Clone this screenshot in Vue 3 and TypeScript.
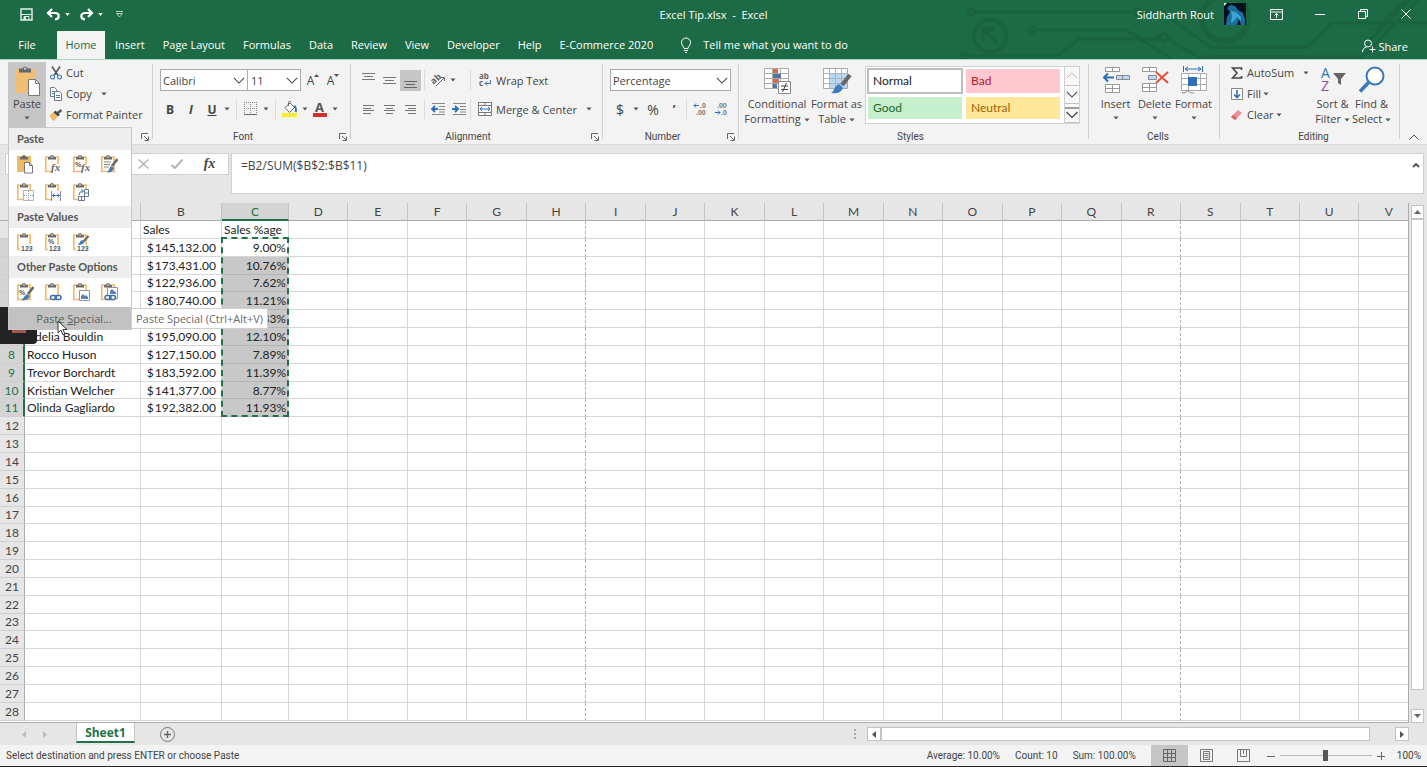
<script setup lang="ts">
import { ref } from 'vue'

interface Row {
  name: string
  sales: string
  share: string
}

const tabs = ['Insert', 'Page Layout', 'Formulas', 'Data', 'Review', 'View', 'Developer', 'Help', 'E-Commerce 2020']
const columns = 'ABCDEFGHIJKLMNOPQRSTUV'.split('')

const data: Record<number, Row> = {
  1: { name: '', sales: 'Sales', share: 'Sales %age' },
  2: { name: '', sales: '145,132.00', share: '9.00%' },
  3: { name: '', sales: '173,431.00', share: '10.76%' },
  4: { name: '', sales: '122,936.00', share: '7.62%' },
  5: { name: '', sales: '180,740.00', share: '11.21%' },
  6: { name: '', sales: '', share: '9.33%' },
  7: { name: 'Adelia Bouldin', sales: '195,090.00', share: '12.10%' },
  8: { name: 'Rocco Huson', sales: '127,150.00', share: '7.89%' },
  9: { name: 'Trevor Borchardt', sales: '183,592.00', share: '11.39%' },
  10: { name: 'Kristian Welcher', sales: '141,377.00', share: '8.77%' },
  11: { name: 'Olinda Gagliardo', sales: '192,382.00', share: '11.93%' },
}

const pasteOptions = [
  { icon: 'p-all', label: 'Paste' },
  { icon: 'p-fx', label: 'Formulas' },
  { icon: 'p-pfx', label: 'Formulas & Number Formatting' },
  { icon: 'p-src', label: 'Keep Source Formatting' },
  { icon: 'p-nob', label: 'No Borders' },
  { icon: 'p-wid', label: 'Keep Source Column Widths' },
  { icon: 'p-trn', label: 'Transpose' },
]
const valueOptions = [
  { icon: 'p-val', label: 'Values' },
  { icon: 'p-valn', label: 'Values & Number Formatting' },
  { icon: 'p-vals', label: 'Values & Source Formatting' },
]
const otherOptions = [
  { icon: 'p-fmt', label: 'Formatting' },
  { icon: 'p-lnk', label: 'Paste Link' },
  { icon: 'p-pic', label: 'Picture' },
  { icon: 'p-lpic', label: 'Linked Picture' },
]

const formula = ref('=B2/SUM($B$2:$B$11)')
const zoom = ref(50)
const selected = (n: number) => n >= 2 && n <= 11
</script>

<template>
  <div class="app">
    <svg class="defs" aria-hidden="true">
      <symbol id="down" viewBox="0 0 6 4"><path d="M0.5 0.5h5L3 3.5z" fill="#555" /></symbol>
      <symbol id="chev" viewBox="0 0 14 8"><path d="M1 1l6 6 6-6" fill="none" stroke="#444" stroke-width="1.2" /></symbol>
      <symbol id="launch" viewBox="0 0 8 8">
        <path d="M0.5 6V0.5H7M3 3l4 4M7.5 3.5v4h-4" fill="none" stroke="#666" />
      </symbol>
      <symbol id="clip" viewBox="0 0 18 20">
        <path d="M1.800 3h12.400v14.500H1.800z" fill="#fdfcf9" stroke="#ecbc74" stroke-width="1.700" />
        <path d="M4 3h2C6.200 0.300 9.800 0.300 10 3h2v2.500H4z" fill="#6a6b6f" /><circle cx="8" cy="3" r="0.800" fill="#fff" />
      </symbol>
      <symbol id="p-all" viewBox="0 0 18 20">
        <path d="M1 2h14v16H1z" fill="#f0b968" />
        <path d="M4 3h2C6.200 0.300 9.800 0.300 10 3h2v2.500H4z" fill="#6a6b6f" />
        <path d="M8.500 8.500h5l3 3v7.500h-8z" fill="#fff" stroke="#777" /><path d="M13.500 8.500v3h3" fill="none" stroke="#777" />
      </symbol>
      <symbol id="p-fx" viewBox="0 0 18 20">
        <use href="#clip" /><path d="M9 10h9v10H9z" fill="#fff" />
        <text x="7" y="17" class="gfx">fx</text>
      </symbol>
      <symbol id="p-pfx" viewBox="0 0 18 20">
        <use href="#clip" /><path d="M10 10h8v10h-8z" fill="#fff" />
        <text x="3" y="13" class="gnum">%</text><text x="9" y="17" class="gfx">fx</text>
      </symbol>
      <symbol id="p-src" viewBox="0 0 18 20">
        <use href="#clip" /><path d="M4 8h7M4 10.500h6M4 13h5" stroke="#888" />
        <path d="M17.500 5l-5.500 7" stroke="#666" stroke-width="2.500" />
        <path d="M7 18.500c2-1 2-5 4.500-6.500l2.500 2c-1 3-3 4.500-7 4.500z" fill="#3f7cb8" />
      </symbol>
      <symbol id="p-nob" viewBox="0 0 18 20">
        <use href="#clip" /><path d="M7.500 8.500h10v10h-10z" fill="#fff" stroke="#b5b5b5" />
        <path d="M12.500 9v9M8 13.500h9" stroke="#999" stroke-dasharray="1 1" />
      </symbol>
      <symbol id="p-wid" viewBox="0 0 18 20">
        <use href="#clip" /><path d="M8 9h10v11H8z" fill="#fff" />
        <path d="M7.500 9v10M16.500 9v10" stroke="#8a8fa0" /><path d="M8 13.500h8M10.500 11.500l-2 2 2 2M13.500 11.500l2 2-2 2" fill="none" stroke="#3f6fa8" />
      </symbol>
      <symbol id="p-trn" viewBox="0 0 18 20">
        <use href="#clip" /><path d="M7 8h11v12H7z" fill="#fff" />
        <path d="M12.500 7.500h4v7h-4zM12.500 11h4M6.500 14.500h6v4h-6zM9.500 14.500v4" fill="none" stroke="#66789a" />
        <path d="M7.500 13c0-3 1-4 3.500-4M9.500 7l2 2-2 2" fill="none" stroke="#3f6fa8" />
      </symbol>
      <symbol id="p-val" viewBox="0 0 18 20">
        <use href="#clip" /><path d="M4 12h14v8H4z" fill="#fff" /><text x="5" y="19" class="gnum">123</text>
      </symbol>
      <symbol id="p-valn" viewBox="0 0 18 20">
        <use href="#clip" /><path d="M4 13h14v7H4z" fill="#fff" /><text x="4" y="12" class="gnum">%</text><text x="5" y="19" class="gnum">123</text>
      </symbol>
      <symbol id="p-vals" viewBox="0 0 18 20">
        <use href="#clip" /><path d="M4 13h14v7H4z" fill="#fff" /><path d="M16.500 4l-5 5.500" stroke="#666" stroke-width="2" />
        <path d="M6 13c1-1 2-4 4-5l2.500 2c-1 2-3 3-6.500 3z" fill="#3f7cb8" /><text x="5" y="19" class="gnum">123</text>
      </symbol>
      <symbol id="p-fmt" viewBox="0 0 18 20">
        <use href="#clip" /><text x="3" y="13" class="gnum">%</text><path d="M17.500 5l-5.500 7" stroke="#666" stroke-width="2.500" />
        <path d="M5 18.500c2-1 3-5 6.500-6.500l2.500 2c-1 3-4 4.500-9 4.500z" fill="#3f7cb8" />
      </symbol>
      <symbol id="p-lnk" viewBox="0 0 18 20">
        <use href="#clip" /><path d="M6 13h12v7H6z" fill="#fff" />
        <rect x="6.500" y="13.500" width="6" height="4" rx="2" fill="none" stroke="#3f6fa8" stroke-width="1.500" />
        <rect x="11" y="13.500" width="6" height="4" rx="2" fill="none" stroke="#3f6fa8" stroke-width="1.500" />
      </symbol>
      <symbol id="p-pic" viewBox="0 0 18 20">
        <use href="#clip" /><path d="M7.500 8.500h10v10h-10z" fill="#fff" stroke="#8d95a2" />
        <path d="M9 17v-3l2-2 2 2 1-1 2 2v2z" fill="#5d84b4" />
      </symbol>
      <symbol id="p-lpic" viewBox="0 0 18 20">
        <use href="#clip" /><path d="M7.500 5.500h10v11h-10z" fill="#fff" stroke="#8d95a2" />
        <path d="M10 12V9l2-2 2 2 2 1v2z" fill="#5d84b4" /><path d="M4.500 13h11v5h-11z" fill="#fff" />
        <rect x="5" y="13.500" width="6" height="4" rx="2" fill="none" stroke="#3f6fa8" stroke-width="1.500" />
        <rect x="9.500" y="13.500" width="6" height="4" rx="2" fill="none" stroke="#3f6fa8" stroke-width="1.500" />
      </symbol>
    </svg>

    <header class="top">
      <svg class="circuit" viewBox="0 0 527 59" aria-hidden="true">
        <g fill="none" stroke="#1b623f" stroke-width="3">
          <circle cx="71" cy="12" r="3" /><path d="M75 12h158" /><circle cx="237" cy="12" r="3" />
          <circle cx="90" cy="36" r="16" stroke-width="4" />
          <path d="M97 43L84 30M83 41V29h12" stroke-width="4" />
          <circle cx="132" cy="30" r="3" /><path d="M136 30h90l46 29" />
          <circle cx="63" cy="56" r="3" /><path d="M67 56h90l22-17h80" /><path d="M259 36l5-3 6 4-6 5z" />
          <path d="M268 39l30 18h165l55-57" /><path d="M240 12h22l48 35h98l24-24h95" />
          <path d="M475 30l30-30M470 40l40-40" />
          <circle cx="325" cy="18" r="23" stroke-width="6" />
        </g>
      </svg>
      <div class="titlebar">
        <div class="quick">
          <button class="q save" aria-label="Save">
            <svg width="13" height="13" viewBox="0 0 13 13"><path d="M1 1h11v11H1z" fill="none" stroke="#e6f2eb" stroke-width="1.400" /><path d="M1 6.500h11M4 12V8.500h5V12" fill="none" stroke="#e6f2eb" /><path d="M4 9h2v3H4z" fill="#e6f2eb" /></svg>
          </button>
          <button class="q undo" aria-label="Undo">
            <svg width="15" height="13" viewBox="0 0 15 13"><path d="M2 5h7c5 0 5 6 0 6.500M6 1L2 5l4 4" fill="none" stroke="#fff" stroke-width="2.200" /></svg>
          </button>
          <button class="q drop" aria-label="Undo list"><svg width="5" height="3" viewBox="0 0 6 4"><path d="M0 0h6L3 4z" fill="#fff" /></svg></button>
          <button class="q redo" aria-label="Redo">
            <svg width="15" height="13" viewBox="0 0 15 13"><path d="M13 5H6C1 5 1 11 6 11.500M9 1l4 4-4 4" fill="none" stroke="#fff" stroke-width="2.200" /></svg>
          </button>
          <button class="q drop" aria-label="Redo list"><svg width="5" height="3" viewBox="0 0 6 4"><path d="M0 0h6L3 4z" fill="#fff" /></svg></button>
          <button class="q more" aria-label="Customize Quick Access Toolbar">
            <svg width="9" height="7" viewBox="0 0 9 7"><path d="M1 0.500h7M1.500 2.500h6L4.500 6z" fill="none" stroke="#b4d2c2" /></svg>
          </button>
        </div>
        <h1 class="title">Excel Tip.xlsx&nbsp; -&nbsp; Excel</h1>
        <div class="account">
          <span>Siddharth Rout</span>
          <svg class="avatar" width="22" height="22" viewBox="0 0 22 22" role="img" aria-label="Profile picture">
            <path d="M0 0h22v22H0z" fill="#04101c" />
            <path d="M3 5l3-3 5 1 3 4 5 3 2 6v6h-4l-2-6-2 6H2l1-8 3-5z" fill="#1a6c9c" />
            <path d="M7 8l5 1 5 5 0 4-4-4-4 5-2 1 1-7z" fill="#3aa6d4" /><path d="M0 0h3L0 3z" fill="#cfe" />
          </svg>
          <button class="win" aria-label="Ribbon Display Options">
            <svg width="13" height="11" viewBox="0 0 13 11"><path d="M0.500 0.500h12v10H0.500zM0.500 3h12M6.500 9V4.500M4.500 6.500l2-2 2 2" fill="none" stroke="#fff" /></svg>
          </button>
          <button class="win" aria-label="Minimize"><svg width="10" height="10" viewBox="0 0 10 10"><path d="M0 5.500h10" stroke="#fff" /></svg></button>
          <button class="win" aria-label="Restore"><svg width="10" height="10" viewBox="0 0 10 10"><path d="M0.500 2.500h7v7h-7zM2.500 2.500v-2h7v7h-2" fill="none" stroke="#fff" /></svg></button>
          <button class="win" aria-label="Close"><svg width="10" height="10" viewBox="0 0 10 10"><path d="M0.500 0.500l9 9M9.500 0.500l-9 9" stroke="#fff" /></svg></button>
        </div>
      </div>
      <nav class="tabs">
        <button class="tab file">File</button>
        <button class="tab active">Home</button>
        <button v-for="t in tabs" :key="t" class="tab">{{ t }}</button>
        <button class="tab tell">
          <svg width="12" height="16" viewBox="0 0 12 16"><path d="M4 11.500c0-2-2.500-3-2.500-6a4.500 4.500 0 0 1 9 0c0 3-2.500 4-2.500 6zM4 13.500h4M5 15.500h2" fill="none" stroke="#fff" /></svg>
          Tell me what you want to do
        </button>
        <button class="tab share">
          <svg width="14" height="14" viewBox="0 0 14 14"><circle cx="6" cy="4.500" r="3.500" fill="none" stroke="#fff" /><path d="M0.500 13c0-3 2-4.500 4-5M10.500 7.500v6M7.500 10.500h6" fill="none" stroke="#fff" /></svg>
          Share
        </button>
      </nav>
    </header>

    <section class="ribbon">
      <div class="group clipboard">
        <div class="paste-wrap">
          <button class="paste">
            <svg width="26" height="30" viewBox="0 0 26 30">
              <path d="M1 3h20v24H1z" fill="#f0be74" /><path d="M5 2.500h3.500C9 0 13 0 13.500 2.500H17v4H5z" fill="#66676b" />
              <circle cx="11" cy="2.800" r="1.200" fill="#c6c6c6" />
              <path d="M14.500 13.500h7l4 4v12h-11z" fill="#fff" stroke="#777" /><path d="M21.500 13.500v4h4" fill="none" stroke="#777" />
            </svg>
            <span>Paste</span>
            <svg class="dn" width="6" height="4"><use href="#down" /></svg>
          </button>
          <div class="menu">
            <h2>Paste</h2>
            <div class="opts">
              <button v-for="o in pasteOptions" :key="o.icon" :aria-label="o.label"><svg width="18" height="20"><use :href="'#' + o.icon" /></svg></button>
            </div>
            <h2>Paste Values</h2>
            <div class="opts">
              <button v-for="o in valueOptions" :key="o.icon" :aria-label="o.label"><svg width="18" height="20"><use :href="'#' + o.icon" /></svg></button>
            </div>
            <h2>Other Paste Options</h2>
            <div class="opts">
              <button v-for="o in otherOptions" :key="o.icon" :aria-label="o.label"><svg width="18" height="20"><use :href="'#' + o.icon" /></svg></button>
            </div>
            <button class="special">Paste <u>S</u>pecial...
              <span class="tip" role="tooltip">Paste Special (Ctrl+Alt+V)</span>
              <svg class="cursor" width="11" height="17" viewBox="0 0 11 17"><path d="M1 1v12l3-3 2 5 2-1-2-4.500h4z" fill="#fff" stroke="#333" /></svg>
            </button>
          </div>
        </div>
        <div class="stack">
          <button>
            <svg width="12" height="14" viewBox="0 0 12 14"><path d="M2 0.500l6 9M10 0.500l-6 9" stroke="#555" stroke-width="1.600" /><circle cx="2.500" cy="11" r="2" fill="none" stroke="#4a7ebb" stroke-width="1.200" /><circle cx="9.500" cy="11" r="2" fill="none" stroke="#4a7ebb" stroke-width="1.200" /></svg>
            Cut
          </button>
          <button>
            <svg width="12" height="14" viewBox="0 0 12 14"><path d="M0.500 0.500h4l2 2v7h-6z" fill="#fff" stroke="#6d7b8d" /><path d="M4.500 4.500h5l2 2v7h-7z" fill="#fff" stroke="#6d7b8d" /><path d="M6 8.500h4M6 10.500h4M2 4.500h2M2 6.500h2" stroke="#4a7ebb" /></svg>
            Copy <svg class="dn far" width="6" height="4"><use href="#down" /></svg>
          </button>
          <button>
            <svg width="12" height="12" viewBox="0 0 12 12"><path d="M0 6l3.500-3 4.500 4-4 5c-2-1-4-3-4-6z" fill="#f0b968" /><path d="M4.500 2.500l4.500 4" stroke="#444" stroke-width="2.500" /><path d="M7 4.500L11.500 1" stroke="#555" stroke-width="2.500" /></svg>
            Format Painter
          </button>
        </div>
        <button class="launch" aria-label="Clipboard settings"><svg width="8" height="8"><use href="#launch" /></svg></button>
      </div>

      <div class="group font">
        <div class="line">
          <label class="combo face"><select aria-label="Font"><option>Calibri</option></select><svg width="12" height="7"><use href="#chev" /></svg></label>
          <label class="combo size"><select aria-label="Font size"><option>11</option></select><svg width="12" height="7"><use href="#chev" /></svg></label>
          <button class="w20 grow" aria-label="Increase font size">A<svg width="5" height="3" viewBox="0 0 5 3"><path d="M0 3l2.500-3L5 3z" fill="#555" /></svg></button>
          <button class="w20 grow" aria-label="Decrease font size">A<svg width="5" height="3" viewBox="0 0 5 3"><path d="M0 0l2.500 3L5 0z" fill="#555" /></svg></button>
        </div>
        <div class="line">
          <button class="w20"><b>B</b></button>
          <button class="w22"><b><i>I</i></b></button>
          <button class="w20"><b><u>U</u></b></button>
          <button class="w10" aria-label="Underline styles"><svg class="dn" width="6" height="4"><use href="#down" /></svg></button>
          <i class="sep" />
          <button class="w20" aria-label="Borders"><svg width="14" height="14" viewBox="0 0 14 14"><path d="M0.500 0v13M6.500 0v13M12.500 0v13M0 0.500h13M0 6.500h13" stroke="#888" stroke-dasharray="1 1" /><path d="M0 12.500h13" stroke="#666" /></svg></button>
          <button class="w10" aria-label="Border styles"><svg class="dn" width="6" height="4"><use href="#down" /></svg></button>
          <i class="sep" />
          <button class="w20" aria-label="Fill color"><svg width="16" height="16" viewBox="0 0 16 16"><path d="M0 12h15v4H0z" fill="#f7ec2e" /><path d="M3 6.500l5-4.500 4.500 4.500-5 5z" fill="#fff" stroke="#666" /><path d="M6.500 5V1.500c0-1.500 2.500-1.500 2.500 0" fill="none" stroke="#666" /><path d="M12 5c2 1 2.500 4 1.500 6" fill="none" stroke="#3f6fa8" stroke-width="2" /></svg></button>
          <button class="w10" aria-label="Fill colors"><svg class="dn" width="6" height="4"><use href="#down" /></svg></button>
          <button class="w20" aria-label="Font color"><svg width="16" height="16" viewBox="0 0 16 16"><text x="3" y="11" class="ga">A</text><path d="M1 12h14v4H1z" fill="#d0312d" /></svg></button>
          <button class="w10" aria-label="Font colors"><svg class="dn" width="6" height="4"><use href="#down" /></svg></button>
        </div>
        <div class="cap font-cap">Font</div>
        <button class="launch" aria-label="Font settings"><svg width="8" height="8"><use href="#launch" /></svg></button>
      </div>

      <div class="group align">
        <div class="line">
          <button class="w21" aria-label="Top align"><svg class="up" width="13" height="7" viewBox="0 0 13 7"><path d="M0 0.500h13M2 3.500h9M0 6.500h13" stroke="#777" /></svg></button>
          <button class="w21" aria-label="Middle align"><svg width="13" height="7" viewBox="0 0 13 7"><path d="M0 0.500h13M2 3.500h9M0 6.500h13" stroke="#777" /></svg></button>
          <button class="w21 on" aria-label="Bottom align"><svg class="low" width="13" height="7" viewBox="0 0 13 7"><path d="M0 0.500h13M2 3.500h9M0 6.500h13" stroke="#666" /></svg></button>
          <i class="sep" />
          <button class="w20" aria-label="Orientation"><svg width="15" height="14" viewBox="0 0 15 14"><text x="0" y="9" class="gor" transform="rotate(-42 5 7)">ab</text><path d="M5 13l8-8M10 4.500h3.500V8" fill="none" stroke="#666" /></svg></button>
          <button class="w10" aria-label="Orientation list"><svg class="dn" width="6" height="4"><use href="#down" /></svg></button>
          <i class="sep gap" />
          <button class="wide"><svg width="14" height="14" viewBox="0 0 14 14"><text x="1" y="6" class="gab">ab</text><text x="1" y="13" class="gab">c</text><path d="M12.500 7v3.500H7M9 8.500l-2 2 2 2" fill="none" stroke="#3f6fa8" /></svg>Wrap Text</button>
        </div>
        <div class="line">
          <button class="w21" aria-label="Align left"><svg width="11" height="9" viewBox="0 0 11 9"><path d="M0 0.500h11M0 3.500h8M0 5.500h11M0 8.500h8" stroke="#777" /></svg></button>
          <button class="w21" aria-label="Center"><svg width="11" height="9" viewBox="0 0 11 9"><path d="M0 0.500h11M2 3.500h7M0 5.500h11M2 8.500h7" stroke="#777" /></svg></button>
          <button class="w21" aria-label="Align right"><svg width="11" height="9" viewBox="0 0 11 9"><path d="M0 0.500h11M3 3.500h8M0 5.500h11M3 8.500h8" stroke="#777" /></svg></button>
          <i class="sep" />
          <button class="w21" aria-label="Decrease indent"><svg width="15" height="12" viewBox="0 0 15 12"><path d="M1 0.500h13M8 3.500h6M8 6.500h6M1 11.500h13M8 9h6" stroke="#888" /><path d="M7 6H1M4 3L1 6l3 3" fill="none" stroke="#2f6db5" stroke-width="1.800" /></svg></button>
          <button class="w21" aria-label="Increase indent"><svg width="15" height="12" viewBox="0 0 15 12"><path d="M1 0.500h13M8 3.500h6M8 6.500h6M1 11.500h13M8 9h6" stroke="#888" /><path d="M0 6h6M3 3l3 3-3 3" fill="none" stroke="#2f6db5" stroke-width="1.800" /></svg></button>
          <i class="sep tight" />
          <button class="wide"><svg width="14" height="14" viewBox="0 0 14 14"><path d="M0.500 0.500h13v13H0.500zM0.500 3.500h13M0.500 10.500h13M7 0v3.500M7 10.500V14" fill="#fff" stroke="#777" /><path d="M2 7h10M4 5L2 7l2 2M10 5l2 2-2 2" fill="none" stroke="#2f6db5" /></svg>Merge &amp; Center<svg class="dn far" width="6" height="4"><use href="#down" /></svg></button>
        </div>
        <div class="cap mid">Alignment</div>
        <button class="launch" aria-label="Alignment settings"><svg width="8" height="8"><use href="#launch" /></svg></button>
      </div>

      <div class="group number">
        <div class="line">
          <label class="combo fmt"><select aria-label="Number format"><option>Percentage</option></select><svg width="12" height="7"><use href="#chev" /></svg></label>
        </div>
        <div class="line">
          <button class="w20 sym">$</button>
          <button class="w10" aria-label="Accounting formats"><svg class="dn" width="6" height="4"><use href="#down" /></svg></button>
          <button class="w22 sym">%</button>
          <button class="w20 sym"><b>’</b></button>
          <i class="sep" />
          <button class="w21" aria-label="Increase decimal"><svg width="14" height="14" viewBox="0 0 14 14"><text x="7" y="6" class="gdec">.0</text><text x="3" y="13" class="gdec">.00</text><path d="M6 3.500H1M3 1.500l-2 2 2 2" fill="none" stroke="#2f6db5" /></svg></button>
          <button class="w21" aria-label="Decrease decimal"><svg width="14" height="14" viewBox="0 0 14 14"><text x="3" y="6" class="gdec">.00</text><text x="7" y="13" class="gdec">.0</text><path d="M1 10.500h5M4 8.500l2 2-2 2" fill="none" stroke="#2f6db5" /></svg></button>
        </div>
        <div class="cap">Number</div>
        <button class="launch" aria-label="Number settings"><svg width="8" height="8"><use href="#launch" /></svg></button>
      </div>

      <div class="group styles">
        <div class="bigs">
          <button class="big b62">
            <svg width="28" height="27" viewBox="0 0 28 27"><path d="M1.500 1.500h24v20h-24zM1.500 6.500h24M1.500 11.500h24M1.500 16.500h24M9.500 1.500v20M17.500 1.500v20" fill="#fff" stroke="#aaa" /><path d="M10 2h5v4h-5zM10 12h6v4h-6z" fill="#d9694f" /><path d="M10 7h8v4h-8zM10 17h4v4h-4z" fill="#4a74ae" /><path d="M15.500 14.500h12v12h-12z" fill="#fff" stroke="#888" /><path d="M18 19h7M18 22.500h7M23.500 16l-4 9" stroke="#444" /></svg>
            <span>Conditional<br />Formatting <svg class="dn" width="6" height="4"><use href="#down" /></svg></span>
          </button>
          <button class="big b58">
            <svg width="30" height="27" viewBox="0 0 30 27"><path d="M1.500 1.500h24v20h-24z" fill="#fff" stroke="#aaa" /><path d="M8 7h17v14H8z" fill="#bcd8ee" /><path d="M1.500 6.500h24M1.500 11.500h24M1.500 16.500h24M7.500 1.500v20M13.500 1.500v20M19.500 1.500v20" stroke="#aab4bd" /><path d="M28 8l-8 10" stroke="#666" stroke-width="4" /><path d="M9 26c3-1 3-7 8-9l4 4c-2 5-8 6-12 5z" fill="#3b7cc0" /></svg>
            <span>Format as<br />Table <svg class="dn" width="6" height="4"><use href="#down" /></svg></span>
          </button>
          <div class="gallery">
            <div class="swatches">
              <button class="sw normal">Normal</button><button class="sw bad">Bad</button>
              <button class="sw good">Good</button><button class="sw neutral">Neutral</button>
            </div>
            <div class="spin">
              <button class="off" aria-label="Previous styles"><svg width="12" height="7" viewBox="0 0 14 8"><path d="M1 7l6-6 6 6" fill="none" stroke="#aaa" /></svg></button>
              <button aria-label="Next styles"><svg width="12" height="7"><use href="#chev" /></svg></button>
              <button aria-label="More styles"><svg width="14" height="12" viewBox="0 0 14 12"><path d="M0 1h14M1.500 5L7 10.500 12.500 5" fill="none" stroke="#444" stroke-width="1.200" /></svg></button>
            </div>
          </div>
        </div>
        <div class="cap styles-cap">Styles</div>
      </div>

      <div class="group cells">
        <div class="bigs">
          <button class="big b39">
            <svg width="28" height="28" viewBox="0 0 28 28"><path d="M3.500 1.500h14v4h-14zM10.500 1.500v4M3.500 18.500h14v8h-14zM10.500 18.500v8M3.500 22.500h14" fill="#fff" stroke="#999" /><path d="M14.500 9.500h13v4h-13zM20.500 9.500v4" fill="#bcd8ee" stroke="#889" /><path d="M12 11.500H2M6 7.500l-4 4 4 4" fill="none" stroke="#2f6db5" stroke-width="2" /></svg>
            <span>Insert</span><svg class="dn" width="6" height="4"><use href="#down" /></svg>
          </button>
          <button class="big b39">
            <svg width="28" height="28" viewBox="0 0 28 28"><path d="M1.500 1.500h14v4h-14zM8.500 1.500v4M1.500 17.500h14v8h-14zM8.500 17.500v8M1.500 21.500h14" fill="#fff" stroke="#999" /><path d="M7.500 9.500h8v4h-8z" fill="#bcd8ee" stroke="#889" /><path d="M15 6l12 11M27 6L15 17" stroke="#e0523c" stroke-width="2" /></svg>
            <span>Delete</span><svg class="dn" width="6" height="4"><use href="#down" /></svg>
          </button>
          <button class="big b39">
            <svg width="28" height="28" viewBox="0 0 28 28"><path d="M1.500 7.500h25v17h-25zM1.500 12.500h25M1.500 18.500h25M8.500 7.500v17M20.500 7.500v17" fill="#fff" stroke="#aaa" /><path d="M8 11h9v9H8z" fill="#2f6db5" /><path d="M2 27c3 0 5-1 6-3 1 3 4 3 6 3" fill="none" stroke="#888" /><path d="M3.500 0v6M22.500 0v6M5 3h16M8 1L5 3l3 2M18 1l3 2-3 2" fill="none" stroke="#2f6db5" /></svg>
            <span>Format</span><svg class="dn" width="6" height="4"><use href="#down" /></svg>
          </button>
        </div>
        <div class="cap">Cells</div>
      </div>

      <div class="group editing">
        <div class="bigs">
          <div class="stack">
            <button><svg width="12" height="12" viewBox="0 0 12 12"><path d="M10.500 3V1H1.500L6 6l-4.500 5h9V9" fill="none" stroke="#444" stroke-width="1.600" /></svg>AutoSum<svg class="dn far" width="6" height="4"><use href="#down" /></svg></button>
            <button><svg width="12" height="12" viewBox="0 0 12 12"><path d="M0.500 0.500h11v11H0.500z" fill="#fff" stroke="#888" /><path d="M6 2v7M3 6.500l3 3 3-3" fill="none" stroke="#2f6db5" stroke-width="1.600" /></svg>Fill<svg class="dn near" width="6" height="4"><use href="#down" /></svg></button>
            <button><svg width="12" height="12" viewBox="0 0 12 12"><path d="M0 8l7-7 4 3-7 7z" fill="#ec8f96" /><path d="M0 8l2-2 4 3-2 2z" fill="#d9626b" /></svg>Clear<svg class="dn near" width="6" height="4"><use href="#down" /></svg></button>
          </div>
          <button class="big b39">
            <svg width="28" height="28" viewBox="0 0 28 28"><text x="2" y="12" class="gaz blue">A</text><text x="2" y="25" class="gaz violet">Z</text><path d="M14 7h13l-5 6v6l-3-2v-4z" fill="#666" /></svg>
            <span>Sort &amp;<br />Filter <svg class="dn" width="6" height="4"><use href="#down" /></svg></span>
          </button>
          <button class="big b39">
            <svg width="28" height="28" viewBox="0 0 28 28"><circle cx="17" cy="10" r="8.500" fill="#fff" stroke="#3b78b8" stroke-width="2" /><path d="M11 16L2 25.500" stroke="#3b78b8" stroke-width="3.500" /></svg>
            <span>Find &amp;<br />Select <svg class="dn" width="6" height="4"><use href="#down" /></svg></span>
          </button>
        </div>
        <div class="cap">Editing</div>
      </div>
      <button class="collapse" aria-label="Collapse ribbon"><svg width="10" height="6" viewBox="0 0 10 6"><path d="M0.500 5.500L5 1l4.500 4.500" fill="none" stroke="#555" /></svg></button>
    </section>

    <section class="formula">
      <input class="namebox" aria-label="Name box" />
      <div class="fxbar">
        <button aria-label="Cancel"><svg width="11" height="10" viewBox="0 0 11 10"><path d="M0.500 0.500l10 9M10.500 0.500l-10 9" stroke="#b5b5b5" stroke-width="1.500" /></svg></button>
        <button aria-label="Enter"><svg width="12" height="10" viewBox="0 0 12 10"><path d="M0.500 6l3.500 3L11.500 0.500" fill="none" stroke="#b5b5b5" stroke-width="2" /></svg></button>
        <button class="fx">fx</button>
      </div>
      <textarea v-model="formula" class="entry" aria-label="Formula" spellcheck="false"></textarea>
      <svg class="fold" width="8" height="5" viewBox="0 0 8 5"><path d="M1 4l3-3 3 3" fill="none" stroke="#555" stroke-width="2" /></svg>
    </section>

    <main class="sheet">
      <div class="grid">
        <table>
          <colgroup><col class="c-num" /><col class="c-a" /><col class="c-b" /><col class="c-c" /><col v-for="n in 19" :key="n" /></colgroup>
          <thead>
            <tr><th class="corner"></th><th v-for="c in columns" :key="c" :class="{ cur: c === 'C' }">{{ c }}</th></tr>
          </thead>
          <tbody>
            <tr v-for="n in 28" :key="n">
              <th :class="{ cur: selected(n) }">{{ n > 7 ? n : '' }}</th>
              <td>{{ data[n]?.name }}</td>
              <td :class="{ money: selected(n) }"><span v-if="selected(n) && data[n].sales">$</span><span>{{ data[n]?.sales }}</span></td>
              <td :class="{ pct: selected(n), picked: n > 2 && n < 12, ants: n === 2 }">{{ data[n]?.share }}</td>
              <td v-for="c in columns.slice(3)" :key="c" :class="{ brk: c === 'H' || c === 'R' }"></td>
            </tr>
          </tbody>
        </table>
      </div>
      <div class="vscroll">
        <button aria-label="Scroll up"><svg width="7" height="4" viewBox="0 0 7 4"><path d="M0 4l3.500-4L7 4z" fill="#666" /></svg></button>
        <div class="vthumb"></div>
        <button aria-label="Scroll down"><svg width="7" height="4" viewBox="0 0 7 4"><path d="M0 0l3.500 4L7 0z" fill="#666" /></svg></button>
      </div>
      <div class="webcam"><i></i></div>
    </main>

    <section class="sheetbar">
      <button class="nav" aria-label="Previous sheet"><svg width="4" height="7" viewBox="0 0 4 7"><path d="M4 0v7L0 3.500z" fill="#bbb" /></svg></button>
      <button class="nav" aria-label="Next sheet"><svg width="4" height="7" viewBox="0 0 4 7"><path d="M0 0v7l4-3.500z" fill="#bbb" /></svg></button>
      <button class="sheettab">Sheet1</button>
      <button class="add" aria-label="New sheet"><svg width="15" height="15" viewBox="0 0 15 15"><circle cx="7.500" cy="7.500" r="7" fill="none" stroke="#777" /><path d="M7.500 4v7M4 7.500h7" stroke="#666" stroke-width="1.400" /></svg></button>
      <svg class="grip" width="3" height="11" viewBox="0 0 3 11"><path d="M0 0h2v2H0zM0 4h2v2H0zM0 8h2v2H0z" fill="#aaa" /></svg>
      <div class="hscroll">
        <button aria-label="Scroll left"><svg width="4" height="7" viewBox="0 0 4 7"><path d="M4 0v7L0 3.500z" fill="#555" /></svg></button>
        <div class="hthumb"></div>
        <button aria-label="Scroll right"><svg width="4" height="7" viewBox="0 0 4 7"><path d="M0 0v7l4-3.500z" fill="#555" /></svg></button>
      </div>
    </section>

    <footer class="status">
      <span class="msg">Select destination and press ENTER or choose Paste</span>
      <span class="stat">Average: 10.00%</span>
      <span class="stat">Count: 10</span>
      <span class="stat">Sum: 100.00%</span>
      <button class="view on" aria-label="Normal view"><svg width="13" height="13" viewBox="0 0 13 13"><path d="M0.500 0.500h12v12H0.500zM4.500 0v13M8.500 0v13M0 4.500h13M0 8.500h13" fill="none" stroke="#666" /></svg></button>
      <button class="view" aria-label="Page layout view"><svg width="13" height="13" viewBox="0 0 13 13"><path d="M0.500 0.500h12v12H0.500zM3.500 2.500h6v8h-6zM4.500 4.500h4M4.500 6.500h4M4.500 8.500h4" fill="none" stroke="#777" /></svg></button>
      <button class="view" aria-label="Page break view"><svg width="13" height="13" viewBox="0 0 13 13"><path d="M0.500 0.500h12v12H0.500zM3.500 0v7.500h6V0M6.500 0v5" fill="none" stroke="#777" /></svg></button>
      <button class="zm" aria-label="Zoom out"><svg width="8" height="8" viewBox="0 0 8 8"><path d="M0 4.500h8" stroke="#666" /></svg></button>
      <input v-model="zoom" class="zoom" type="range" min="0" max="100" aria-label="Zoom" />
      <button class="zm" aria-label="Zoom in"><svg width="8" height="8" viewBox="0 0 8 8"><path d="M0 4.500h8M4.500 0v8" stroke="#666" /></svg></button>
      <span class="pctz">100%</span>
    </footer>
  </div>
</template>

<style>
body { overflow: hidden; }
</style>

<style scoped>
.app { display: flex; flex-direction: column; height: 100vh; background: #e6e6e6; color: #444; font: 11px/15px "Open Sans", "Noto Sans", sans-serif; }
.app *, .app *::after { box-sizing: border-box; }
.defs { display: none; }
button { display: flex; align-items: center; justify-content: center; padding: 0; border: 0; background: none; color: inherit; font: inherit; white-space: nowrap; }
svg { flex: none; }
.gfx { font: italic bold 11px "Liberation Serif", serif; fill: #666; }
.gnum { font: bold 7px "Liberation Sans", sans-serif; fill: #555; }
.gab { font: bold 8px "Open Sans", sans-serif; fill: #666; }
.gor { font: bold 9px "Open Sans", sans-serif; fill: #666; }
.gdec { font: bold 7px "Liberation Sans", sans-serif; fill: #777; }
.ga { font: bold 13px "Open Sans", sans-serif; fill: #555; }
.gaz { font: 14px "Open Sans", sans-serif; }
.blue { fill: #2f75b5; }
.violet { fill: #9452a5; }

.top { position: relative; background: #1d6b46; border-bottom: 1px solid #a5d9bd; color: #fff; }
.circuit { position: absolute; right: 0; top: 0; width: 527px; height: 59px; }
.titlebar { position: relative; display: grid; grid-template-columns: 1fr auto 1fr; align-items: center; height: 31px; padding-bottom: 3px; }
.quick { display: flex; align-items: center; padding-left: 16px; }
.q { height: 20px; }
.save { width: 20px; margin-right: 7px; }
.undo, .redo { width: 20px; }
.drop { width: 8px; margin-right: 5px; }
.more { width: 20px; }
.title { margin: 0; font: inherit; }
.account { display: flex; align-items: center; justify-content: flex-end; }
.avatar { margin: 0 9px 0 10px; }
.win { width: 43px; height: 28px; }
.tabs { position: relative; display: flex; height: 28px; padding-left: 1px; }
.tab { padding: 0 9px 1px; }
.file { width: 52px; margin-right: 4px; }
.active { width: 48px; margin-right: 1px; background: #f3f3f3; color: #1d6b46; }
.tell { gap: 11px; padding-left: 18px; }
.share { gap: 2px; margin-left: auto; padding: 2px 19px 0 0; }

.ribbon { display: flex; height: 85px; background: #f3f3f3; border-bottom: 1px solid #dadada; }
.group { position: relative; display: flex; flex-direction: column; padding: 6px 0 0 7px; }
.group::after { content: ""; position: absolute; right: 0; top: 4px; bottom: 5px; width: 1px; background: #d0d0d0; }
.line { display: flex; align-items: center; height: 28px; margin-bottom: 1px; }
.cap { margin-top: auto; font: 10px/14px Roboto, "Open Sans", sans-serif; text-align: center; }
.launch { position: absolute; right: 4px; bottom: 3px; width: 9px; height: 9px; }
.clipboard { flex-direction: row; width: 153px; padding: 2px 0 0 8px; }
.paste-wrap { position: relative; z-index: 5; }
.paste { flex-direction: column; width: 38px; height: 65px; justify-content: flex-start; background: #c6c6c6; padding-top: 4px; }
.paste span { margin: 0 0 5px; }
.stack { display: flex; flex-direction: column; padding-left: 4px; }
.stack button { height: 21px; gap: 4px; justify-content: flex-start; }
.far { margin-left: 5px; }
.near { margin-left: -2px; }
.menu { position: absolute; left: 0; top: 65px; width: 124px; background: #fff; border: 1px solid #c8c8c8; }
.menu h2 { margin: 0; padding-left: 8px; background: #eee; color: #555; font: bold 11px/22px Lato, "Open Sans", sans-serif; }
.opts { display: flex; flex-wrap: wrap; padding-left: 2px; }
.opts button { width: 28px; height: 28px; }
.special { position: relative; width: 100%; height: 22px; margin-top: 1px; padding-left: 11px; background: #c2c2c2; color: #5c5c5c; white-space: pre; }
.tip { position: absolute; left: 122px; top: 1px; height: 21px; padding: 0 4px; border: 1px solid #cfcfcf; background: #fff; color: #6a6a6a; line-height: 19px; }
.cursor { position: absolute; left: 48px; top: 13px; }

.font { width: 198px; }
.font .sep { margin: 0 4px; }
.font-cap { padding-right: 25px; }
.combo { position: relative; display: flex; height: 22px; }
.combo select { width: 100%; appearance: none; border: 1px solid #ababab; border-radius: 0; background: #fff; color: #444; font: inherit; padding: 0 2px; }
.combo svg { position: absolute; right: 3px; top: 8px; pointer-events: none; }
.face { width: 88px; }
.size { width: 54px; margin: 0 2px 0 -1px; }
.size select { padding-left: 3px; }
.fmt { width: 121px; }
.w10 { width: 10px; }
.w20 { width: 20px; }
.w21 { width: 21px; }
.w22 { width: 22px; }
.line button { height: 21px; }
.line b { font-size: 12px; }
.grow { font-size: 12px; }
.grow svg { align-self: flex-start; margin-top: 4px; }
.sep { width: 1px; height: 20px; background: #dcdcdc; }
.align { width: 252px; }
.align .sep { margin: 0 3px; }
.align .gap { margin: 0 7px 0 12px; }
.align .tight { margin: 0 7px 0 0; }
.align .on { background: #c6c6c6; }
.up { margin-bottom: 8px; }
.low { margin-top: 8px; }
.wide { gap: 4px; }
.mid { padding-right: 25px; }
.number { width: 136px; }
.number .cap { padding-right: 24px; }
.number .sep { margin: 0 2px; }
.number .w10 { margin: 0 1px; }
.sym { font-size: 14px; }

.bigs { display: flex; height: 64px; align-items: flex-start; }
.big { flex-direction: column; line-height: 15px; }
.big span { text-align: center; margin-top: 2px; }
.big .dn { vertical-align: middle; }
.big > .dn { margin-top: 5px; }
.b62 { width: 62px; }
.b58 { width: 57px; }
.b39 { width: 39px; }
.styles { flex: 1; }
.styles .bigs { padding-top: 1px; }
.styles-cap { padding-right: 14px; }
.gallery { display: flex; flex: 1; height: 58px; margin: -1px 9px 0 0; border: 1px solid #d0d0d0; background: #fff; }
.swatches { flex: 1; display: grid; grid-template-columns: 1fr 1fr; gap: 4px; padding: 2px 4px 4px 2px; }
.sw { justify-content: flex-start; padding-left: 5px; font: 12px/16px Lato, sans-serif; }
.normal { border: 2px solid #bdbdbd; margin: -1px; padding-left: 4px; color: #222; }
.bad { background: #ffc7ce; color: #b0202a; }
.good { background: #c6efce; color: #1b6b25; }
.neutral { background: #ffe699; color: #9c6500; }
.spin { display: flex; flex-direction: column; width: 15px; border-left: 1px solid #d0d0d0; }
.spin button { flex: 1; border-bottom: 1px solid #c4c4c4; background: #f8f8f8; }
.cells { width: 131px; }
.editing { width: 180px; }
.cells .bigs, .editing .bigs { height: 60px; }
.editing .stack { flex: 1; margin-top: -4px; }
.editing .b39:last-child { margin-right: 9px; }
.collapse { align-self: flex-end; width: 27px; height: 14px; }

.formula { position: relative; display: flex; align-items: flex-start; height: 58px; padding: 8px 3px 0 5px; }
.namebox { width: 115px; height: 22px; margin-right: 8px; border: 1px solid #d0d0d0; background: #fff; }
.fxbar { display: flex; width: 101px; height: 22px; margin-right: 2px; border: 1px solid #d0d0d0; background: #fff; }
.fxbar button { width: 34px; padding-right: 4px; }
.fx { font: italic bold 14px/20px "Liberation Serif", serif; }
.entry { flex: 1; height: 41px; padding: 4px 9px; border: 1px solid #d0d0d0; border-radius: 0; background: #fff; color: #444; resize: none; outline: 0; overflow: hidden; font: 12px/16px "Open Sans", sans-serif; }
.fold { position: absolute; right: 7px; top: 18px; }

.sheet { position: relative; display: flex; flex: 1; min-height: 0; }
.grid { flex: 1; min-width: 0; overflow: hidden; padding-bottom: 1px; border-bottom: 1px solid #ababab; border-right: 1px solid #ababab; background: #fff; }
table { width: calc(100% + 11px); height: 100%; table-layout: fixed; border-collapse: separate; border-spacing: 0; color: #222; font: 12px/15px Lato, "Open Sans", sans-serif; }
.c-num { width: 25px; }
.c-a { width: 116px; }
.c-b { width: 81px; }
.c-c { width: 67px; }
th, td { height: 17px; padding: 0 2px; border-right: 1px solid #d6d6d6; border-bottom: 1px solid #d6d6d6; white-space: nowrap; }
th { padding: 0; background: #e6e6e6; color: #444; font-weight: normal; border-bottom-color: #cfcfcf; }
thead th { height: 18px; border-right-color: #c4c4c4; border-bottom-color: #ababab; }
tbody th { border-right-color: #ababab; }
th.cur { background: #d4d4d4; color: #217346; }
thead th.cur { border-bottom: 2px solid #217346; }
tbody th.cur { border-right: 2px solid #217346; }
.money { padding-right: 5px; text-align: right; }
.money span + span { margin-left: 1px; }
.pct { padding-right: 2px; text-align: right; }
.picked { background: #c8c8c8; border-bottom-color: #b4b4b4; }
.ants { position: relative; }
.ants::after { content: ""; position: absolute; z-index: 1; left: -1px; right: -1px; top: -2px; height: 1070%; border: 2px dashed #217346; }
.brk { border-right: 1px dashed #b0b0b0; }
.vscroll { display: flex; flex-direction: column; width: 18px; padding: 2px 3px 0 2px; }
.vscroll button { height: 14px; border: 1px solid #c4c4c4; background: #fff; }
.vthumb { flex: 1; margin-bottom: 19px; border: 1px solid #c4c4c4; background: #fff; }
.webcam { position: absolute; left: 0; top: 104px; width: 37px; height: 37px; background: #232323; border-radius: 0 0 4px 0; }
.webcam i { position: absolute; left: 12px; top: 22px; width: 14px; height: 4px; background: #a8534a; }

.sheetbar { display: flex; height: 22px; }
.nav { width: 21px; }
.nav:first-child { margin-left: 13px; }
.sheettab { width: 59px; height: 20px; margin-left: 21px; background: #fff; border: 1px solid #c4c4c4; border-top: 0; border-bottom: 2px solid #217346; color: #217346; font-weight: bold; font-size: 12px; }
.add { width: 15px; margin-left: 25px; }
.grip { margin: 6px 10px 0 auto; }
.hscroll { display: flex; width: 38%; height: 14px; margin: 4px 18px 0 0; }
.hscroll button { width: 14px; border: 1px solid #c4c4c4; background: #fff; }
.hthumb { flex: 1; margin-right: 25px; border: 1px solid #c4c4c4; background: #fff; }
.status { display: flex; align-items: center; height: 22px; background: #f3f3f3; border-bottom: 1px solid #2a2422; font: 10px/14px Roboto, "Open Sans", sans-serif; }
.msg { margin: 0 auto 0 6px; }
.stat { margin-right: 15px; }
.view { width: 37px; height: 21px; }
.view.on { background: #c6c6c6; }
.zm { width: 18px; height: 20px; }
.zoom { width: 92px; height: 14px; margin: 0; appearance: none; background: linear-gradient(#b8b8b8, #b8b8b8) center / 100% 1px no-repeat; }
.zoom::-webkit-slider-thumb { appearance: none; width: 5px; height: 11px; background: #555; }
.pctz { margin: 0 6px 0 7px; }
</style>
